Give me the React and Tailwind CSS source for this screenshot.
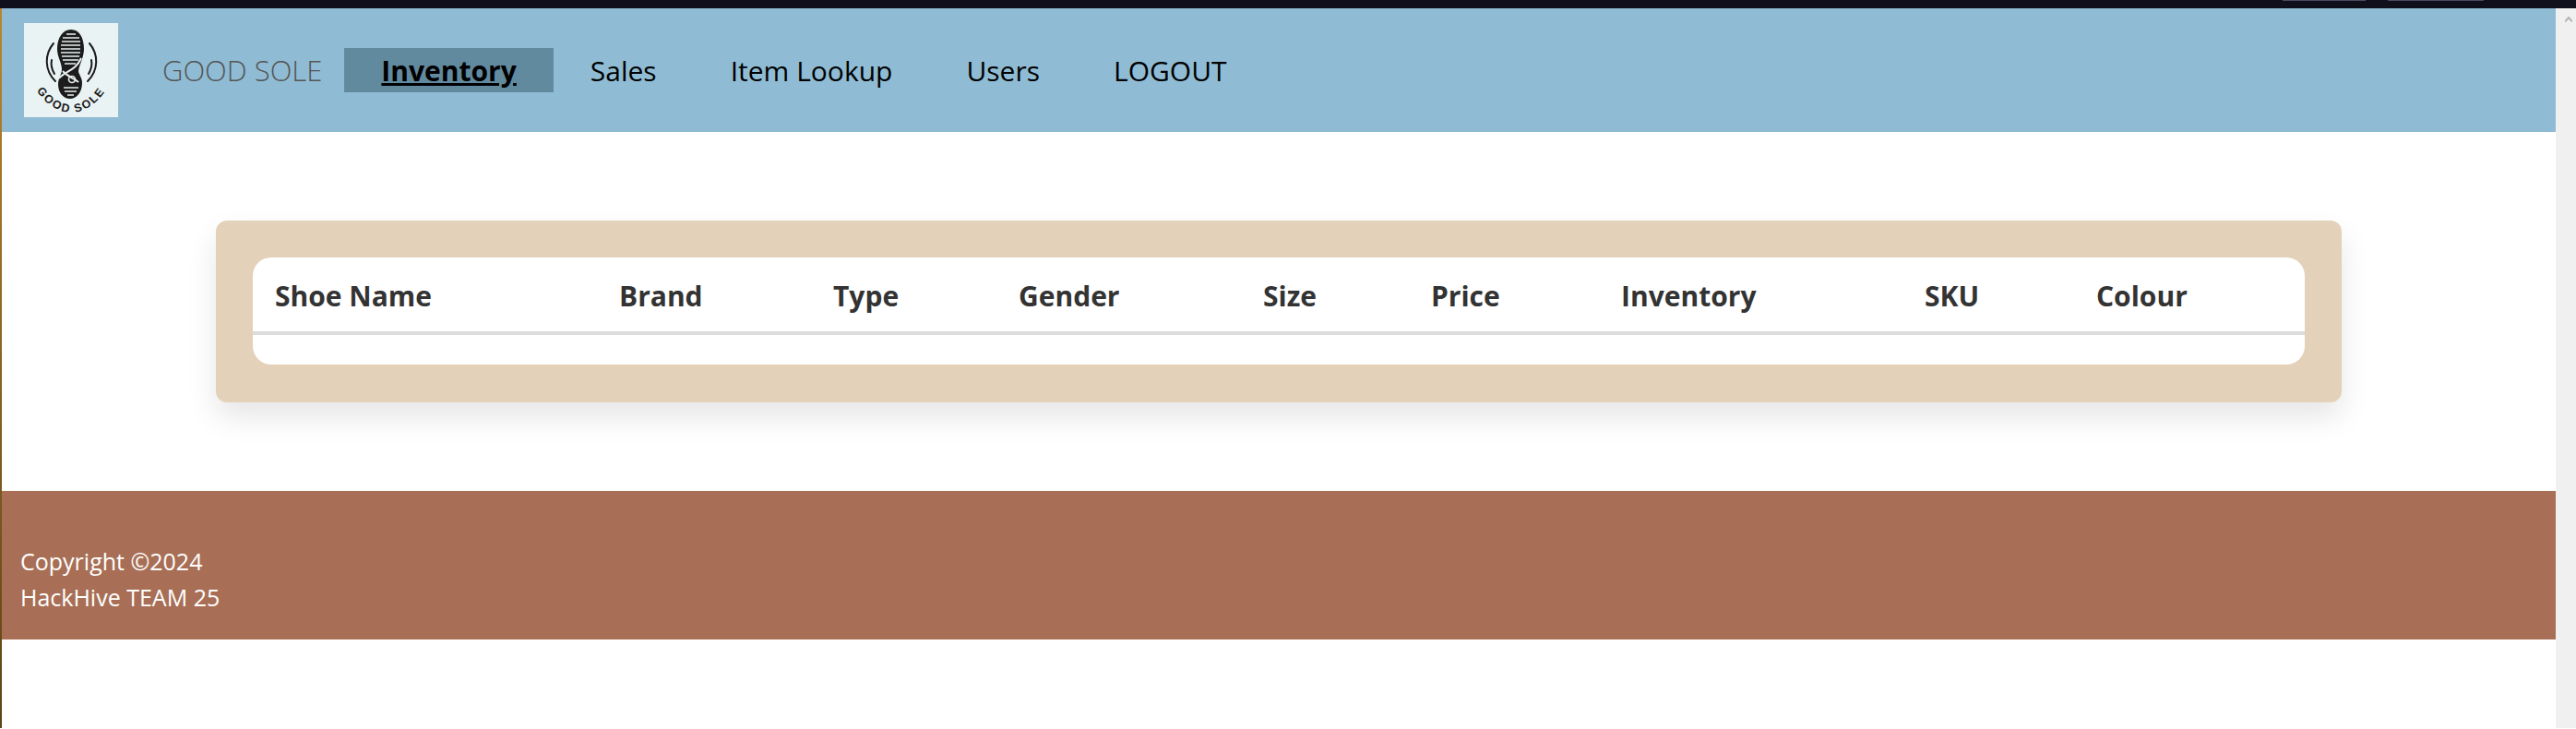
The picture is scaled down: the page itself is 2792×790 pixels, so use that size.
import React from 'react';

const columns = [
  { label: 'Shoe Name', width: 'w-[373px]' },
  { label: 'Brand', width: 'w-[232px]' },
  { label: 'Type', width: 'w-[201px]' },
  { label: 'Gender', width: 'w-[265px]' },
  { label: 'Size', width: 'w-[182px]' },
  { label: 'Price', width: 'w-[206px]' },
  { label: 'Inventory', width: 'w-[329px]' },
  { label: 'SKU', width: 'w-[186px]' },
  { label: 'Colour', width: 'w-[250px]' },
];

function Logo() {
  return (
    <svg viewBox="0 0 102 102" className="w-[102px] h-[102px] shrink-0 bg-[#eaf3f4]">
      <path d="M51 7c9 0 14 9 14 21 0 9-5 17-6 24 0 3 4 7 4 13 0 10-6 17-13 17s-13-6-13-16c0-6 4-11 4-16 0-7-5-13-5-22C36 16 42 7 51 7z" fill="#1c1c1c" />
      <g stroke="#e8eeee" strokeWidth="1.6">
        <path d="M46 12h10M42 16h18M41 20h20M40 24h21M40 28h21M40 32h21M41 36h19M42 40h17M44 44h12" />
        <path d="M43 70h16M44 74h13M47 78h7" />
      </g>
      <path d="M38 60c6-8 18-8 24-22M42 52c5 6 13 8 17 12" fill="none" stroke="#e8eeee" strokeWidth="2" />
      <circle cx="52" cy="61" r="3.5" fill="none" stroke="#e8eeee" strokeWidth="1.6" />
      <g fill="none" stroke="#1c1c1c" strokeWidth="2" strokeLinecap="round">
        <path d="M32 22c-10 12-10 29 2 41" />
        <path d="M71 22c10 12 10 29-2 41" />
        <path d="M30 40c-1 5 0 10 3 15" />
        <path d="M73 40c1 5 0 10-3 15" />
      </g>
      <defs>
        <path id="logo-arc" d="M11 68c9 19 27 29 40 29s31-10 40-29" />
      </defs>
      <text fontFamily="'Liberation Sans', sans-serif" fontSize="12.5" fontWeight="700" fill="#1c1c1c" letterSpacing="1.8">
        <textPath href="#logo-arc" startOffset="50%" textAnchor="middle">GOOD SOLE</textPath>
      </text>
    </svg>
  );
}

function NavItem({ children, active }) {
  if (active) {
    return (
      <a className="h-12 px-10 flex items-center bg-[#628a9f] text-black font-bold underline">{children}</a>
    );
  }
  return <a className="h-12 px-10 flex items-center text-black">{children}</a>;
}

export default function App() {
  return (
    <div className="h-[790px] overflow-hidden bg-white font-['Open_Sans',sans-serif]">
      <div className="h-[9px] bg-[#100f1c] relative">
        <div className="absolute left-[2474px] bottom-[8px] w-[90px] h-px bg-[#4c4860]" />
        <div className="absolute left-[2588px] bottom-[8px] w-[104px] h-px bg-[#4c4860]" />
      </div>
      <div className="flex h-[780px]">
        <div className="w-[2px] bg-gradient-to-b from-[#b8862f] to-[#5f4318]" />
        <main className="flex-1 flex flex-col">
          <header className="h-[134px] bg-[#8fbcd4] flex items-center pl-6 text-[30px]">
            <Logo />
            <span className="ml-12 mr-6 text-[31px] text-[#555] font-light">GOOD SOLE</span>
            <nav className="flex items-center">
              <NavItem active>Inventory</NavItem>
              <NavItem>Sales</NavItem>
              <NavItem>Item Lookup</NavItem>
              <NavItem>Users</NavItem>
              <NavItem>LOGOUT</NavItem>
            </nav>
          </header>
          <section className="h-[389px] px-[232px] pt-24">
            <div className="bg-[#e4d1b9] rounded-xl pt-10 px-10 pb-[41px] shadow-[0_16px_32px_rgba(0,0,0,0.1)]">
              <div className="bg-white rounded-[20px] h-[116px]">
                <table className="w-full table-fixed">
                  <thead>
                    <tr className="border-b-4 border-[#dcdcdc] h-[82px]">
                      {columns.map((col) => (
                        <th key={col.label} className={`${col.width} pl-6 pt-[2px] text-left text-[30px] font-bold text-[#333]`}>
                          {col.label}
                        </th>
                      ))}
                    </tr>
                  </thead>
                </table>
              </div>
            </div>
          </section>
          <footer className="h-[161px] bg-[#a86f56] text-white text-[25px] leading-[39px] pl-5 pt-[57px]">
            <div>Copyright ©2024</div>
            <div>HackHive TEAM 25</div>
          </footer>
        </main>
        <div className="w-[22px] bg-[#f0f0f0] flex justify-center pt-[9px]">
          <svg viewBox="0 0 8 6" className="w-2 h-[6px] ml-[6px]"><path d="M0 5.5 4 1l4 4.5" fill="none" stroke="#b5b5b5" strokeWidth="2" /></svg>
        </div>
      </div>
    </div>
  );
}
